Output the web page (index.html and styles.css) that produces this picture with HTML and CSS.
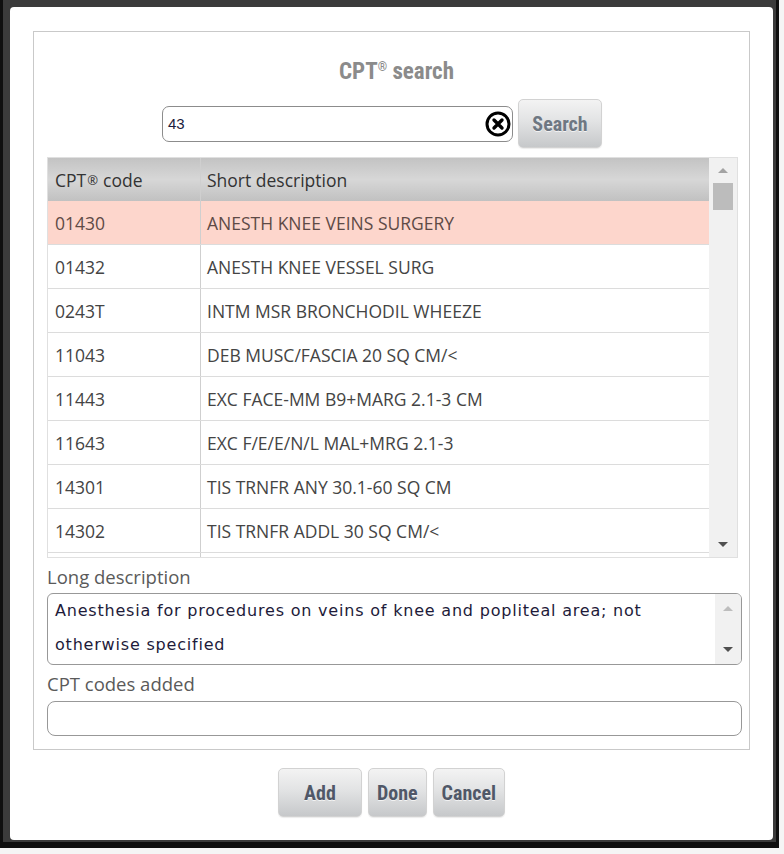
FILE: index.html
```html
<!DOCTYPE html>
<html lang="en">
<head>
<meta charset="utf-8">
<title>CPT search</title>
<link rel="stylesheet" href="styles.css">
</head>
<body>
<div class="frame">
  <div class="dialog">
    <div class="panel">
      <h1 class="title">CPT<sup class="reg">®</sup> search</h1>
      <div class="search-row">
        <div class="search-field">
          <span class="search-value">43</span>
          <svg class="clear" width="26" height="26" viewBox="0 0 26 26">
            <circle cx="13" cy="13" r="11" fill="#fff" stroke="#000" stroke-width="3"/>
            <path d="M9 9 L17 17 M17 9 L9 17" stroke="#000" stroke-width="3.4" stroke-linecap="round"/>
          </svg>
        </div>
        <button class="btn btn-search">Search</button>
      </div>
      <div class="grid">
        <div class="grid-main">
          <div class="grid-head">
            <div class="cell c1">CPT<sup class="hreg">®</sup> code</div>
            <div class="cell c2">Short description</div>
          </div>
          <div class="grid-body">
            <div class="row selected"><div class="cell c1">01430</div><div class="cell c2">ANESTH KNEE VEINS SURGERY</div></div>
            <div class="row"><div class="cell c1">01432</div><div class="cell c2">ANESTH KNEE VESSEL SURG</div></div>
            <div class="row"><div class="cell c1">0243T</div><div class="cell c2">INTM MSR BRONCHODIL WHEEZE</div></div>
            <div class="row"><div class="cell c1">11043</div><div class="cell c2">DEB MUSC/FASCIA 20 SQ CM/&lt;</div></div>
            <div class="row"><div class="cell c1">11443</div><div class="cell c2">EXC FACE-MM B9+MARG 2.1-3 CM</div></div>
            <div class="row"><div class="cell c1">11643</div><div class="cell c2">EXC F/E/E/N/L MAL+MRG 2.1-3</div></div>
            <div class="row"><div class="cell c1">14301</div><div class="cell c2">TIS TRNFR ANY 30.1-60 SQ CM</div></div>
            <div class="row"><div class="cell c1">14302</div><div class="cell c2">TIS TRNFR ADDL 30 SQ CM/&lt;</div></div>
            <div class="row filler"><div class="cell c1"></div><div class="cell c2"></div></div>
          </div>
        </div>
        <div class="vscroll">
          <span class="arrow up"></span>
          <span class="thumb"></span>
          <span class="vspace"></span>
          <span class="arrow down dark"></span>
        </div>
      </div>
      <div class="label">Long description</div>
      <div class="longdesc">
        <div class="longdesc-text">Anesthesia for procedures on veins of knee and popliteal area; not otherwise specified</div>
        <div class="vscroll small">
          <span class="arrow up light"></span>
          <span class="vspace"></span>
          <span class="arrow down dark"></span>
        </div>
      </div>
      <div class="label label-added">CPT codes added</div>
      <div class="added"></div>
    </div>
    <div class="actions">
      <button class="btn btn-add">Add</button>
      <button class="btn">Done</button>
      <button class="btn">Cancel</button>
    </div>
  </div>
</div>
</body>
</html>
```

FILE: styles.css
```css
html, body {
  margin: 0;
  padding: 0;
  background: #f5f5f5;
}

.frame {
  width: 779px;
  height: 848px;
  box-sizing: border-box;
  background: #3b3b3b;
  border-left: 3px solid #0f0f0f;
  border-right: 3px solid #0f0f0f;
  border-bottom: 6px solid #0f0f0f;
  padding: 7px 3px 2px 7px;
}

.dialog {
  height: 833px;
  box-sizing: border-box;
  background: #fff;
  border-radius: 4px;
  padding: 24px 23px 0;
}

.panel {
  border: 1px solid #c9c9c9;
  padding: 20px 7px 13px 13px;
  display: flex;
  flex-direction: column;
}

.title {
  margin: 0;
  height: 40px;
  line-height: 40px;
  text-align: center;
  font-family: "Liberation Sans Narrow", "Roboto Condensed", "DejaVu Sans Condensed", sans-serif;
  font-weight: bold;
  font-size: 23px;
  color: #8b8b8b;
  padding-left: 4px;
}

.reg {
  font-size: 12px;
  vertical-align: 8px;
  line-height: 0;
}

.search-row {
  margin-top: 7px;
  height: 49px;
  display: flex;
  align-items: center;
  gap: 5px;
  padding-left: 115px;
}

.search-field {
  position: relative;
  width: 351px;
  height: 36px;
  box-sizing: border-box;
  border: 1px solid #8c8c8c;
  border-radius: 7px;
  background: #fff;
  display: flex;
  align-items: center;
  padding-left: 5px;
}

.search-value {
  font-family: "Liberation Sans", Arial, sans-serif;
  font-size: 15px;
  color: #1c1c3e;
}

.clear {
  position: absolute;
  right: 1px;
  top: 4px;
}

.btn {
  height: 49px;
  box-sizing: border-box;
  padding: 0 8px;
  border: 1px solid #d2d2d2;
  border-radius: 5px;
  background: linear-gradient(#f3f3f3, #e2e3e4 45%, #c6c8ca);
  font-family: "Liberation Sans Narrow", "Roboto Condensed", "DejaVu Sans Condensed", sans-serif;
  font-weight: bold;
  font-size: 20px;
  color: #505868;
  text-shadow: 0 1px 0 rgba(255, 255, 255, 0.7);
  box-shadow: 0 1px 1px rgba(0, 0, 0, 0.08);
}

.btn-search {
  width: 84px;
  color: #6e7782;
}

.btn-add {
  width: 84px;
}

.grid {
  margin-top: 9px;
  width: 691px;
  height: 401px;
  box-sizing: border-box;
  border: 1px solid #e0e0e0;
  display: flex;
}

.grid-main {
  width: 661px;
  display: flex;
  flex-direction: column;
  overflow: hidden;
}

.grid-head {
  height: 43px;
  flex: none;
  display: flex;
  background: linear-gradient(#c3c3c3, #d7d7d7 50%, #c1c1c1);
  color: #333;
}

.grid-body {
  flex: 1;
  overflow: hidden;
}

.row {
  height: 44px;
  box-sizing: border-box;
  display: flex;
  border-bottom: 1px solid #dcdcdc;
  color: #444;
}

.row.filler {
  height: 4px;
  border-bottom: none;
}

.row.selected {
  background: #fdd6cc;
  color: #5e4a46;
}

.cell {
  display: flex;
  align-items: center;
  font-family: "Open Sans", sans-serif;
  font-size: 17.5px;
  white-space: nowrap;
}

.c1 {
  width: 153px;
  box-sizing: border-box;
  border-right: 1px solid #cfcfcf;
  padding-left: 7px;
}

.c2 {
  flex: 1;
  padding-left: 6px;
}

.hreg {
  font-size: 13px;
  vertical-align: 7px;
  line-height: 0;
  margin: 0 5px 0 1px;
}

.vscroll {
  flex: 1;
  background: #f1f1f1;
  display: flex;
  flex-direction: column;
  align-items: center;
  padding: 10px 0 10px;
}

.arrow {
  width: 0;
  height: 0;
  border-left: 5px solid transparent;
  border-right: 5px solid transparent;
  flex: none;
}

.arrow.up {
  border-bottom: 5px solid #a3a3a3;
}

.arrow.up.light {
  border-bottom-color: #bdbdbd;
}

.arrow.down {
  border-top: 5px solid #505050;
}

.thumb {
  width: 20px;
  height: 27px;
  background: #bcbcbc;
  margin-top: 10px;
  flex: none;
}

.vspace {
  flex: 1;
}

.label {
  height: 35px;
  line-height: 35px;
  padding-top: 1px;
  box-sizing: border-box;
  font-family: "Open Sans", sans-serif;
  font-size: 18.5px;
  color: #5a5a5a;
  white-space: nowrap;
}

.label-added {
  height: 36px;
}

.longdesc {
  height: 72px;
  box-sizing: border-box;
  border: 1px solid #989898;
  border-radius: 6px;
  display: flex;
  overflow: hidden;
}

.longdesc-text {
  flex: 1;
  padding: 0 0 0 7px;
  font-family: "DejaVu Sans", sans-serif;
  font-size: 16px;
  letter-spacing: 0.8px;
  line-height: 34px;
  color: #1e1b3a;
}

.vscroll.small {
  flex: none;
  width: 26px;
  padding: 12px 0 12px;
}

.added {
  height: 35px;
  box-sizing: border-box;
  border: 1px solid #989898;
  border-radius: 8px;
}

.actions {
  margin-top: 18px;
  display: flex;
  justify-content: center;
  gap: 6px;
}
```
